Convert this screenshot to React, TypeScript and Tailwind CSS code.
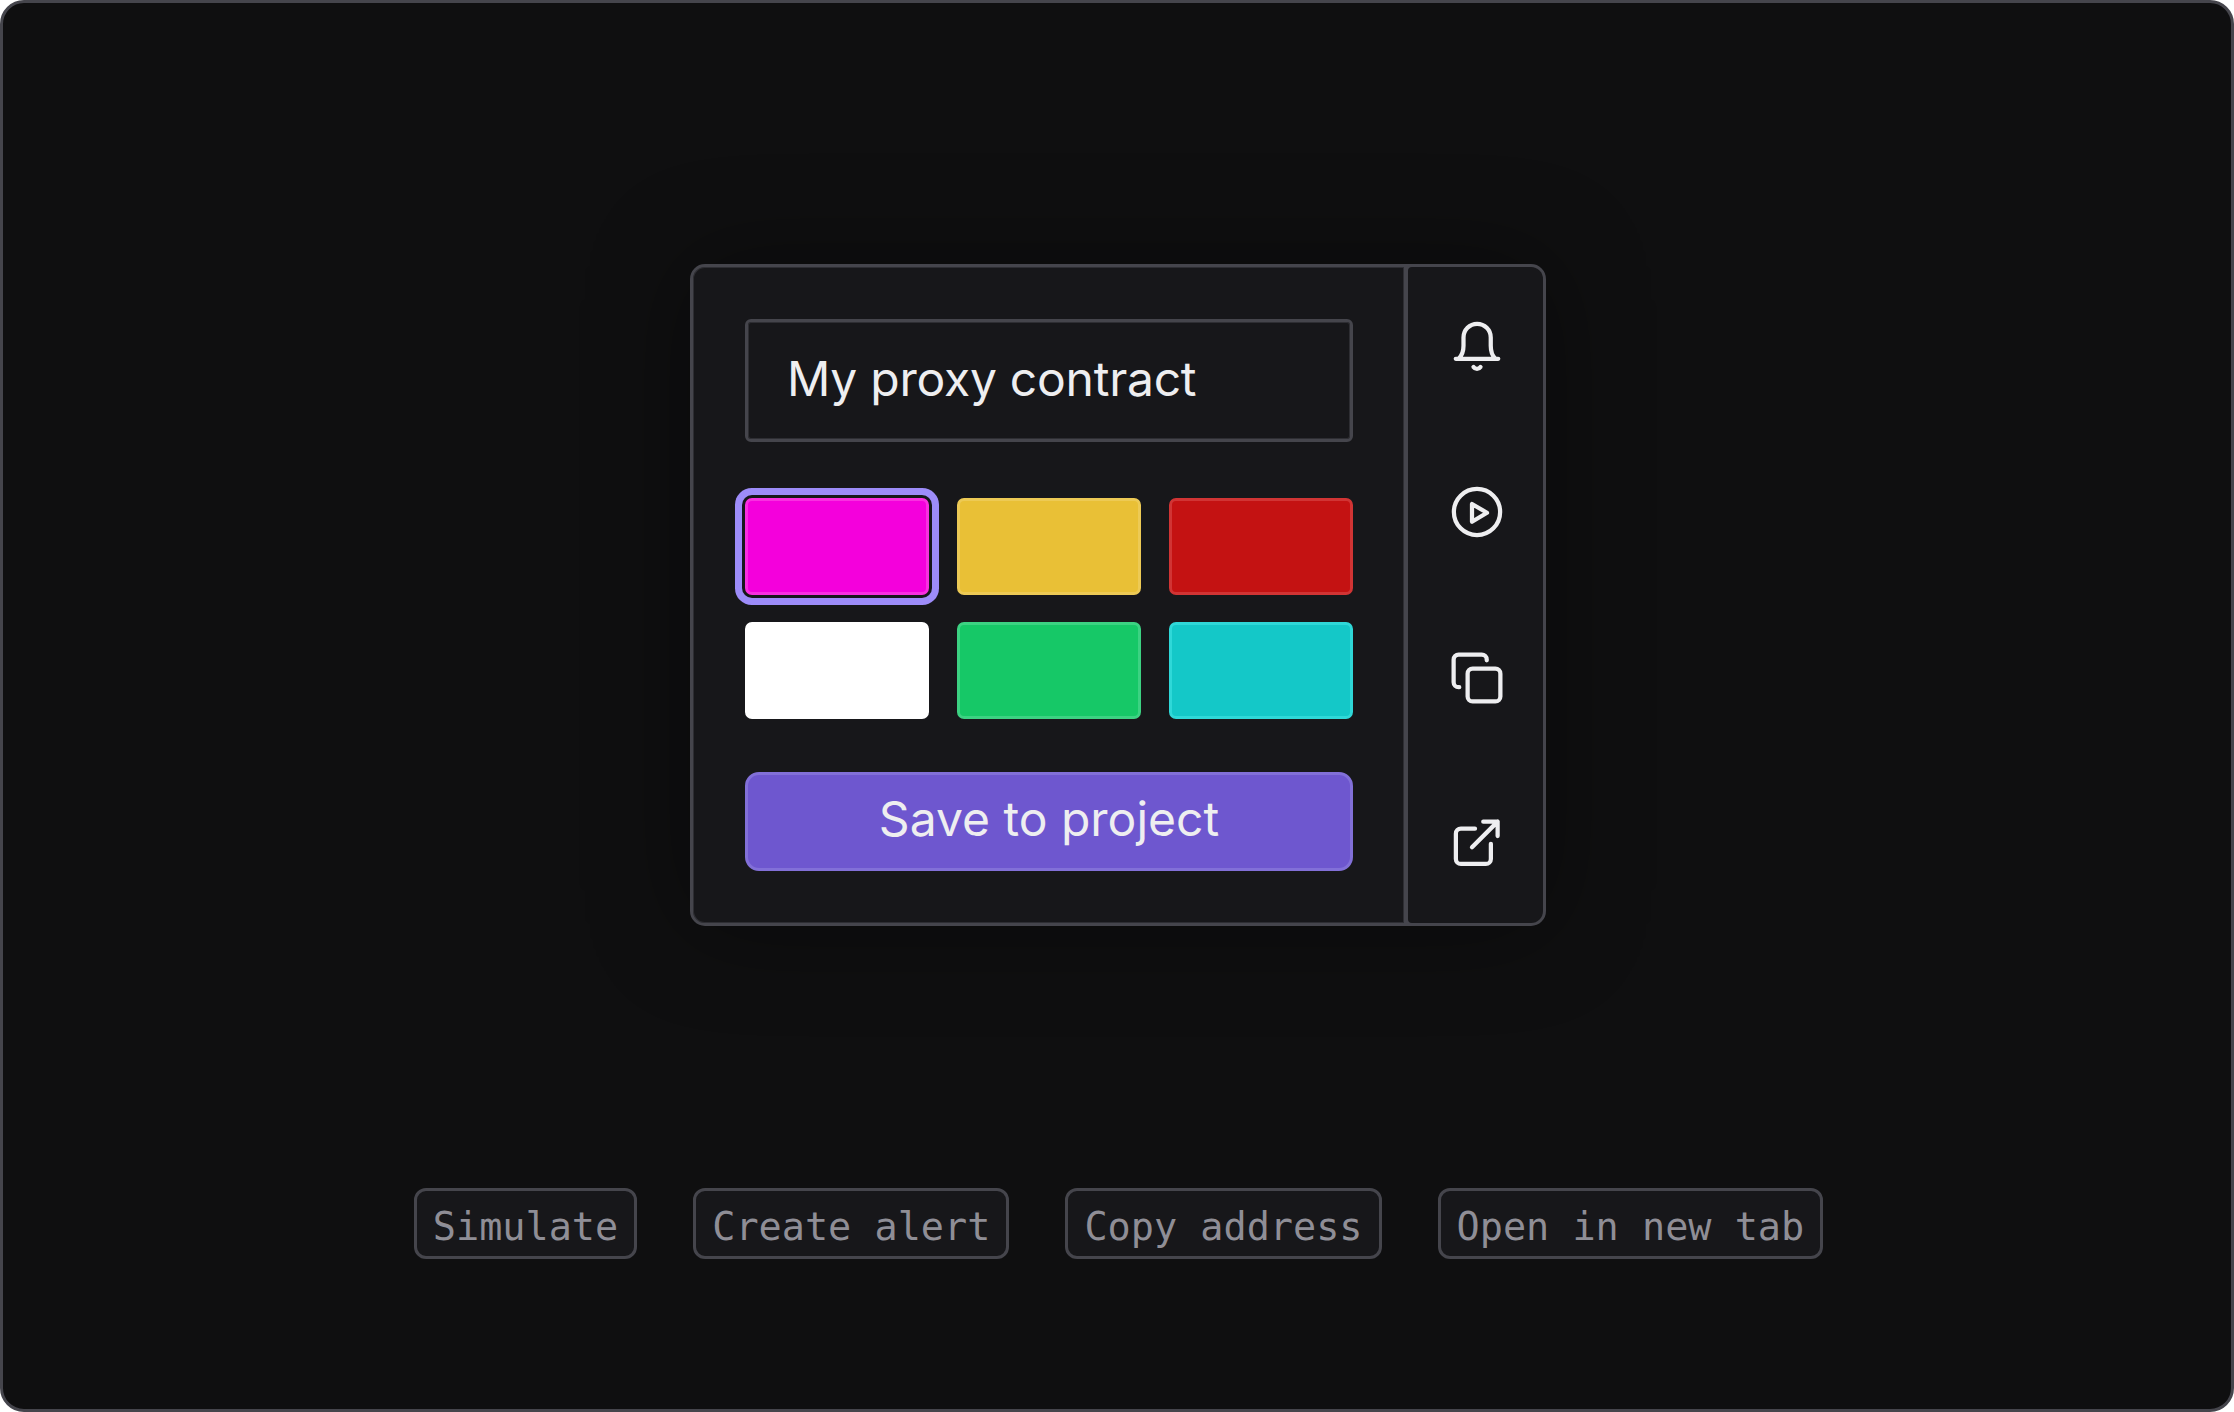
const swatches = [
  { name: 'magenta', className: 'bg-[#f400dc] border-[#f92fe0] ring-[7px] ring-[#9d8cf9] ring-offset-[3px] ring-offset-[#17171a]' },
  { name: 'yellow', className: 'bg-[#e9c036] border-[#edca55]' },
  { name: 'red', className: 'bg-[#c41212] border-[#d13434]' },
  { name: 'white', className: 'bg-white border-white' },
  { name: 'green', className: 'bg-[#16c867] border-[#3cd282]' },
  { name: 'teal', className: 'bg-[#14c8c8] border-[#2fd8d8]' },
];

const tags = ['Simulate', 'Create alert', 'Copy address', 'Open in new tab'];

function Icon({ children }: { children: React.ReactNode }) {
  return (
    <svg
      viewBox="0 0 24 24"
      fill="none"
      stroke="#eeeef0"
      strokeWidth={1.7}
      strokeLinecap="round"
      strokeLinejoin="round"
      className="w-[60px] h-[60px]"
    >
      {children}
    </svg>
  );
}

export default function App() {
  return (
    <div className="h-[1412px] bg-[#0f0f10] border-[3px] border-[#45454c] rounded-[24px] flex flex-col items-center pt-[261px] font-['Inter',sans-serif]">
      <div className="ml-[2px] flex w-[856px] h-[662px] bg-[#45454c] border-[3px] border-[#45454c] rounded-[15px] shadow-[0_0_100px_rgba(0,0,0,0.4)]">
        <div className="w-[711px] bg-[#17171a] rounded-l-[12px] p-[52px] pr-[51px] flex flex-col shadow-[inset_0_0_0_1px_rgba(69,69,76,0.5)]">
          <div className="h-[124px] pb-[3px] border-[3px] border-[#45454c] rounded-[6px] flex items-center pl-[39px] text-[48px] tracking-[-0.25px] text-[#eeeef0] font-normal shadow-[inset_0_0_0_1px_rgba(69,69,76,0.5)]">
            My proxy contract
          </div>
          <div className="grid grid-cols-3 gap-y-[27px] gap-x-[28px] mt-[56px]">
            {swatches.map((swatch) => (
              <div key={swatch.name} className={`h-[97px] border-[3px] rounded-[7px] ${swatch.className}`} />
            ))}
          </div>
          <button className="mt-[53px] h-[99px] pb-[5px] bg-[#6e57cf] border-[3px] border-[#8270d8] rounded-[14px] text-[48px] font-normal text-[#eeeef0]">
            Save to project
          </button>
        </div>
        <div className="ml-[4px] flex-1 bg-[#17171a] rounded-l-[4px] rounded-r-[12px] flex flex-col items-center justify-between py-[50px] pl-[3px]">
          <Icon>
            <path d="M3.5 16.7H20.5M4.6 16.7C6 15.5 6.6 13.5 6.6 11.5V8.2a5.45 5.45 0 0 1 10.9 0V11.5C17.5 13.5 18 15.5 19.4 16.7" />
            <path d="M10.6 20a1.7 1.7 0 0 0 2.8 0" />
          </Icon>
          <Icon>
            <circle cx="12" cy="12" r="9.25" />
            <path d="M10 8.8V15.9L16 12.3Z" />
          </Icon>
          <Icon>
            <path d="M15.9 4.9V4.65a2 2 0 0 0-2-2H4.65a2 2 0 0 0-2 2V13.65a2 2 0 0 0 2 2h.25" />
            <rect x="8.25" y="8.25" width="13.1" height="13.1" rx="2" />
          </Icon>
          <Icon>
            <path d="M11.2 6.25H5.55a2 2 0 0 0-2 2V18.35a2 2 0 0 0 2 2H15.55a2 2 0 0 0 2-2V12.3" />
            <path d="M14.5 3.45H20.25V9.2M10 13.7L20.25 3.45" />
          </Icon>
        </div>
      </div>
      <div className="mt-[262px] ml-[3px] flex gap-[56px]">
        {tags.map((tag) => (
          <div
            key={tag}
            className="h-[71px] pt-[8px] flex items-center px-[16px] bg-[#17171a] border-[3px] border-[#45454c] rounded-[12px] text-[38.5px] leading-none text-[#8f8e96] font-['DejaVu_Sans_Mono',monospace]"
          >
            {tag}
          </div>
        ))}
      </div>
    </div>
  );
}
